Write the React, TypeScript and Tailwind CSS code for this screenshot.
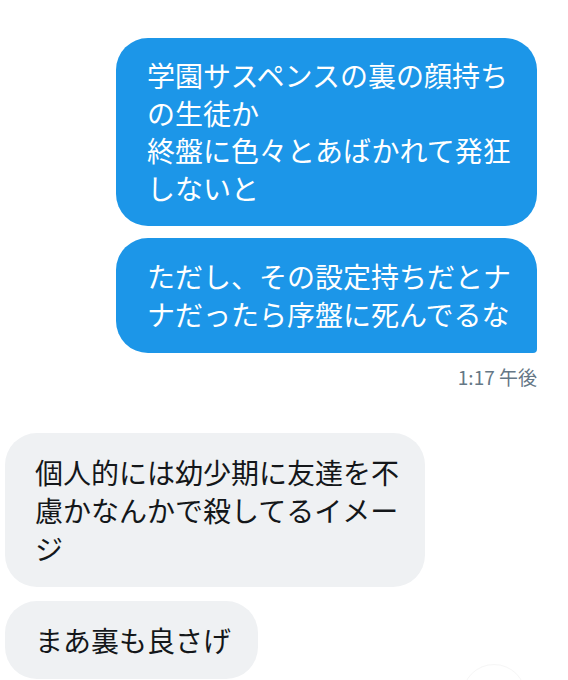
const font = { fontFamily: '"Noto Sans CJK JP", "Noto Sans", sans-serif' };

function Sent({ lines, last }: { lines: string[]; last?: boolean }) {
  return (
    <div className="flex justify-end">
      <div
        className={`w-[421px] bg-[#1c96e8] text-white px-[31px] py-[19px] text-[28px] leading-[37.5px] rounded-[32px] ${
          last ? "rounded-br-[4px] py-[20px]" : ""
        }`}
      >
        {lines.map((l) => (
          <div key={l} className="whitespace-nowrap">
            {l}
          </div>
        ))}
      </div>
    </div>
  );
}

function Received({ lines, width }: { lines: string[]; width: string }) {
  return (
    <div className="flex justify-start">
      <div
        className={`${width} bg-[#eff1f3] text-[#14171a] px-[30px] py-[20px] text-[28px] leading-[38px] rounded-[32px]`}
      >
        {lines.map((l) => (
          <div key={l} className="whitespace-nowrap">
            {l}
          </div>
        ))}
      </div>
    </div>
  );
}

export default function App() {
  return (
    <main className="relative w-[568px] h-[680px] overflow-hidden bg-white" style={font}>
      <div className="flex flex-col pt-[38px] pl-[5px] pr-[31px]">
        <Sent lines={["学園サスペンスの裏の顔持ち", "の生徒か", "終盤に色々とあばかれて発狂", "しないと"]} />
        <div className="h-[12px]" />
        <Sent last lines={["ただし、その設定持ちだとナ", "ナだったら序盤に死んでるな"]} />
        <div className="flex justify-end pt-[12px] text-[19px] leading-[24px] text-[#657786]">
          1:17 午後
        </div>
        <div className="h-[44px]" />
        <Received width="w-[420px]" lines={["個人的には幼少期に友達を不", "慮かなんかで殺してるイメー", "ジ"]} />
        <div className="h-[14px]" />
        <Received width="w-[253px]" lines={["まあ裏も良さげ"]} />
      </div>
      {/* faint scroll button edge */}
      <div className="absolute left-[462px] top-[664px] w-[64px] h-[64px] rounded-full border border-[#f6f6f6] bg-white" />
    </main>
  );
}
